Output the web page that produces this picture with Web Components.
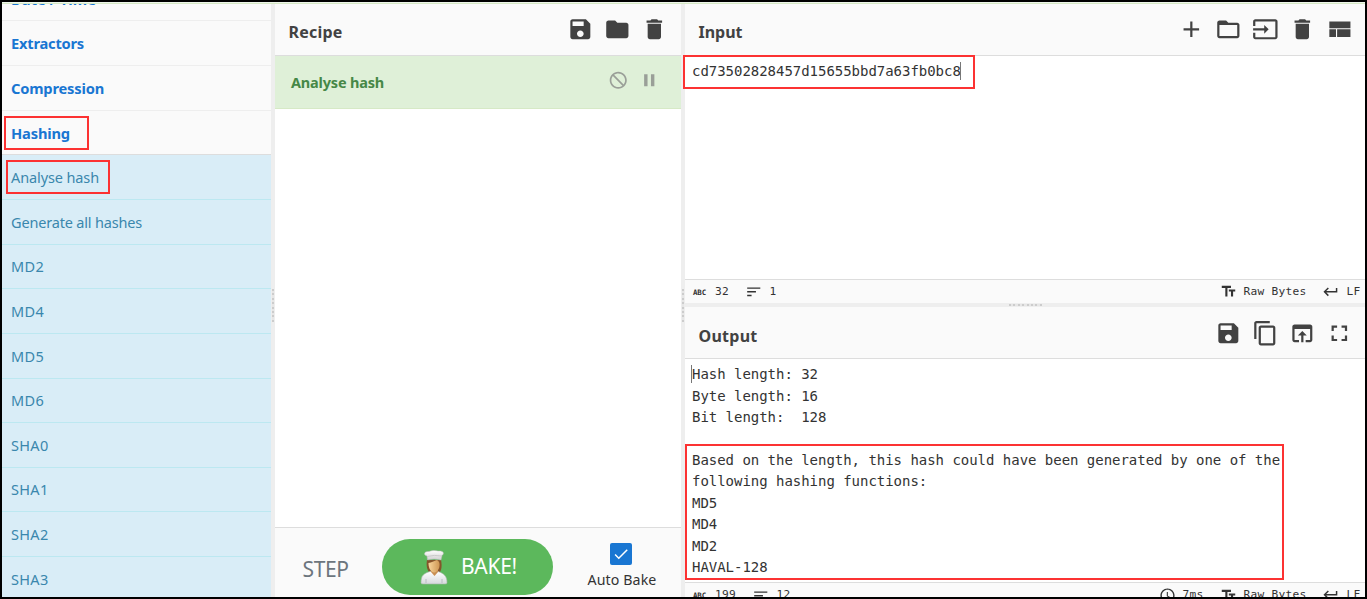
<!DOCTYPE html>
<html lang="en"><head><meta charset="utf-8"><title>CyberChef</title>
<style>
html,body{margin:0;height:100%;overflow:hidden;background:#000}
body{font-family:"Noto Sans","Open Sans",sans-serif}
</style></head>
<body>
<chef-app></chef-app>
<script>
const define = (name, html, setup) => customElements.define(name, class extends HTMLElement {
  connectedCallback() {
    if (this.shadowRoot) return;
    const root = this.attachShadow({mode: 'open'});
    root.innerHTML = html;
    if (setup) setup(this, root);
  }
});

const ICONS = {
  save: 'M17 3H5c-1.11 0-2 .9-2 2v14c0 1.1.89 2 2 2h14c1.1 0 2-.9 2-2V7l-4-4zm-5 16c-1.66 0-3-1.34-3-3s1.34-3 3-3 3 1.34 3 3-1.34 3-3 3zm3-10H5V5h10v4z',
  folder: 'M10 4H4c-1.1 0-1.99.9-1.99 2L2 18c0 1.1.9 2 2 2h16c1.1 0 2-.9 2-2V8c0-1.1-.9-2-2-2h-8l-2-2z',
  trash: 'M6 19c0 1.1.9 2 2 2h8c1.1 0 2-.9 2-2V7H6v12zM19 4h-3.5l-1-1h-5l-1 1H5v2h14V4z',
  add: 'M19 13h-6v6h-2v-6H5v-2h6V5h2v6h6v2z',
  open: 'M20 6h-8l-2-2H4c-1.1 0-1.99.9-1.99 2L2 18c0 1.1.9 2 2 2h16c1.1 0 2-.9 2-2V8c0-1.1-.9-2-2-2zm0 12H4V8h16v10z',
  input: 'M21 3.01H3c-1.1 0-2 .9-2 2V9h2V4.99h18v14.03H3V15H1v4.01c0 1.1.9 1.98 2 1.98h18c1.1 0 2-.88 2-1.98v-14c0-1.11-.9-2-2-2zM11 16l4-4-4-4v3H1v2h10v3z',
  layout: 'M3 19h6v-7H3v7zm7 0h12v-7H10v7zM3 5v6h19V5H3z',
  copy: 'M16 1H4c-1.1 0-2 .9-2 2v14h2V3h12V1zm3 4H8c-1.1 0-2 .9-2 2v14c0 1.1.9 2 2 2h11c1.1 0 2-.9 2-2V7c0-1.1-.9-2-2-2zm0 16H8V7h11v14z',
  browser: 'M19 4H5c-1.11 0-2 .9-2 2v12c0 1.1.89 2 2 2h4v-2H5V8h14v10h-4v2h4c1.1 0 2-.9 2-2V6c0-1.1-.89-2-2-2zm-7 6l-4 4h3v6h2v-6h3l-4-4z',
  full: 'M7 14H5v5h5v-2H7v-3zm-2-4h2V7h3V5H5v5zm12 7h-3v2h5v-5h-2v3zM14 5v2h3v3h2V5h-5z',
  disable: 'M12 2C6.48 2 2 6.48 2 12s4.48 10 10 10 10-4.48 10-10S17.52 2 12 2zm0 18c-4.42 0-8-3.58-8-8 0-1.85.63-3.55 1.69-4.9L16.9 18.31C15.55 19.37 13.85 20 12 20zm6.31-3.1L7.1 5.69C8.45 4.63 10.15 4 12 4c4.42 0 8 3.58 8 8 0 1.85-.63 3.55-1.69 4.9z',
  pause: 'M6 19h4V5H6v14zm8-14v14h4V5h-4z',
  lines: 'M3 18h6v-2H3v2zM3 6v2h18V6H3zm0 7h12v-2H3v2z',
  text: 'M2.5 4v3h5v12h3V7h5V4h-13zm19 5h-9v3h3v7h3v-7h3V9z',
  ret: 'M19 7v4H5.83l3.58-3.59L8 6l-6 6 6 6 1.41-1.41L5.83 13H21V7z',
  clock: 'M11.99 2C6.47 2 2 6.48 2 12s4.47 10 9.99 10C17.52 22 22 17.52 22 12S17.52 2 11.99 2zM12 20c-4.42 0-8-3.58-8-8s3.58-8 8-8 8 3.58 8 8-3.58 8-8 8zm.5-13H11v6l5.25 3.15.75-1.23-4.5-2.67z',
  check: 'M9 16.17L4.83 12l-1.42 1.41L9 19 21 7l-1.41-1.41z'
};

/* <m-icon name size> : one 24-unit glyph */
define('m-icon', `<style>:host{display:block;flex:none}svg{display:block;fill:currentColor}</style><svg viewBox="0 0 24 24"><path/></svg>`, (el, r) => {
  const s = el.getAttribute('size') || '26.67', svg = r.querySelector('svg');
  svg.setAttribute('width', s); svg.setAttribute('height', s);
  r.querySelector('path').setAttribute('d', ICONS[el.getAttribute('name')]);
});

/* <fit-text w> : tracks its text so that it runs exactly w pixels */
define('fit-text', `<style>:host{display:block;flex:none;white-space:pre}span{display:inline-block}</style><span><slot></slot></span>`, (el, r) => {
  const w = +el.getAttribute('w'), span = r.querySelector('span');
  el.style.width = w + 'px';
  span.style.letterSpacing = (w - span.getBoundingClientRect().width) / el.textContent.length + 'px';
});

define('op-category', `<style>
:host{display:flex;align-items:center;box-sizing:border-box;padding-left:9px;background:#fafafa;border-bottom:1px solid #eee;color:#1976d2;font:700 14.7px "Noto Sans",sans-serif;min-height:0}
:host([active]){border-bottom-color:#ddd}
:host([cut]){align-items:flex-end;line-height:22px;overflow:hidden}
:host([cut]) fit-text{margin-bottom:10.500px}
</style><fit-text></fit-text>`, (el, r) => fill(el, r));
define('op-item', `<style>
:host{display:flex;align-items:center;box-sizing:border-box;padding:0 0 1px 9px;background:#d9edf7;border-bottom:1px solid #bce8f1;color:#3a87ad;font:400 14.5px/20px "Noto Sans",sans-serif}
</style><fit-text></fit-text>`, (el, r) => fill(el, r));
function fill(el, r) {
  const old = r.querySelector('fit-text'), t = document.createElement('fit-text');
  t.setAttribute('w', el.getAttribute('w'));
  t.textContent = el.getAttribute('label');
  old.replaceWith(t);
}

define('op-list', `<style>
:host{display:grid;grid-template-rows:17px 45px 45px 44px 45px 45px 44px 45px 45px 44px 45px 44px 45px 45px;overflow:hidden;background:#d9edf7;min-height:0}
</style>
<op-category cut label="Date / Time" w="85"></op-category>
<op-category label="Extractors" w="73"></op-category>
<op-category label="Compression" w="93"></op-category>
<op-category active label="Hashing" w="59"></op-category>
<op-item label="Analyse hash" w="88"></op-item>
<op-item label="Generate all hashes" w="131"></op-item>
<op-item label="MD2" w="33"></op-item>
<op-item label="MD4" w="33"></op-item>
<op-item label="MD5" w="33"></op-item>
<op-item label="MD6" w="33"></op-item>
<op-item label="SHA0" w="37.5"></op-item>
<op-item label="SHA1" w="37.5"></op-item>
<op-item label="SHA2" w="37.5"></op-item>
<op-item label="SHA3" w="37.5"></op-item>`);

define('split-gutter', `<style>
:host{display:flex;align-items:center;justify-content:center;background:#eee}
i{display:block;width:2px;height:33px;background:repeating-linear-gradient(#ccc 0 2px,#e6e6e6 2px 4.4px)}
:host([row]) i{width:33px;height:2px;background:repeating-linear-gradient(90deg,#ccc 0 2px,#e6e6e6 2px 4.4px)}
:host(:not([row])) i{margin-top:9px}
</style><i></i>`);

define('pane-title', `<style>
:host{display:flex;box-sizing:border-box;height:52px;background:#fafafa;border-bottom:1px solid #ddd;color:#424242;justify-content:space-between;padding:0 13px 0 13.5px;align-items:center}
:host([io]){padding-right:12px}
:host([low]){padding-top:2px}
.t{font:700 16px/24px "Noto Sans",sans-serif;padding-top:4px}
.i{display:flex;gap:10.5px;padding-bottom:1px}
</style><div class="t"><slot></slot></div><div class="i"><slot name="icons"></slot></div>`);

define('recipe-op', `<style>
:host{display:flex;box-sizing:border-box;height:53px;background:#dff0d8;border-bottom:1px solid #d6e9c6;align-items:center;padding:0 22px 0 16px;color:#468847;font:700 14.5px "Noto Sans",sans-serif}
.x{margin-left:auto;display:flex;gap:10px;color:#9a9f98;padding-bottom:4px}
</style><fit-text w="93"><slot></slot></fit-text><div class="x"><m-icon name="disable" size="20.5"></m-icon><m-icon name="pause" size="20.5"></m-icon></div>`,
(el, r) => { const t = document.createElement('fit-text'); t.setAttribute('w', 93); t.textContent = el.textContent; r.querySelector('fit-text').replaceWith(t); });

define('chef-face', `<style>:host{display:block}svg{display:block}</style>
<svg width="28" height="36" viewBox="0 0 28 36">
<defs><linearGradient id="h" x2="0" y2="1"><stop stop-color="#fff"/><stop offset="1" stop-color="#cfcfcf"/></linearGradient>
<linearGradient id="f"><stop stop-color="#f7d59b"/><stop offset="1" stop-color="#cf9653"/></linearGradient>
<linearGradient id="b" x2="0" y2="1"><stop stop-color="#fff"/><stop offset="1" stop-color="#d6d9dc"/></linearGradient></defs>
<path d="M7 11C6 16 7 22 10 24h9c3-3 3-8 2-13z" fill="#85542a"/>
<path d="M1 34C1 26 4 24.500 10 22.500h8C24 24.500 27 27 27 34Q27 35 25 35H3Q1 35 1 34z" fill="url(#b)" stroke="#aab7ab" stroke-width=".6"/>
<path d="M11 20h7v3l-3.500 4L11 23z" fill="#c98f52"/>
<path d="M8.500 14C11 14 16 11 17 11c2 1 3 3 2.500 6-.5 4-3 6.500-5.500 6.500S8.500 20 8.500 14z" fill="url(#f)"/>
<path d="M7 7C3 6 4 2 9 2.500c4-1.500 7-1 9-.5 5-.5 7 2 4 4.500L21 11Q14 9 7.500 11z" fill="url(#h)" stroke="#bbb" stroke-width=".5"/>
<path d="M7 7.500Q14 5.500 22 7" fill="none" stroke="#c4c4c4" stroke-width=".8"/>
<path d="M6 30v4M22 30v4" stroke="#b9bec2" stroke-width="1"/>
</svg>`);

define('bake-bar', `<style>
:host{display:grid;grid-template-columns:107px 171px 34.5px 69px;height:70px;box-sizing:border-box;border-top:1px solid #ddd;background:#fafafa;overflow:hidden}
.step{padding:24px 0 0 27.5px;font-size:21px;line-height:34px;color:#6c757d}
.bake{display:flex;align-items:center;box-sizing:border-box;margin-top:11px;height:56px;border-radius:28px;background:#5cb85c;color:#fff;padding-left:38px;font-size:21px;line-height:30px}
.bake fit-text{margin-left:13px;margin-top:-2px}
.auto{grid-column:4;display:flex;flex-direction:column;align-items:center;color:#333;font-size:14.2px;line-height:20px}
.box{margin:15px 2px 5px 0;width:22px;height:22px;border-radius:2px;background:#1976d2;color:#fff;display:flex;align-items:center;justify-content:center}
</style>
<div class="step"><fit-text w="46">STEP</fit-text></div>
<div class="bake"><chef-face></chef-face><fit-text w="56">BAKE!</fit-text></div>
<div class="auto"><div class="box"><m-icon name="check" size="18"></m-icon></div><fit-text w="69">Auto Bake</fit-text></div>`);

define('recipe-pane', `<style>
:host{display:flex;flex-direction:column;background:#fff;min-height:0}
.list{flex:1}
</style>
<pane-title><fit-text w="54">Recipe</fit-text><m-icon slot="icons" name="save"></m-icon><m-icon slot="icons" name="folder"></m-icon><m-icon slot="icons" name="trash"></m-icon></pane-title>
<div class="list"><recipe-op>Analyse hash</recipe-op></div>
<bake-bar></bake-bar>`);

define('status-bar', `<style>
:host{display:flex;height:25px;box-sizing:border-box;border-top:1px solid #ddd;background:#fafafa;color:#333;align-items:center;padding:0 4.5px 0 8px;font:11.2px/20px "DejaVu Sans Mono",monospace;overflow:hidden}
.abc{font:700 7.5px/10px "DejaVu Sans Mono",monospace;margin:2px 9px 0 0}
.ln{margin:1px 7px 0 16px}
.r{margin-left:auto;display:flex;align-items:center}
.r m-icon{margin-right:7px}.r .g{margin-left:15px;margin-right:7.5px}
</style>
<fit-text class="abc" w="13">ABC</fit-text><span class="n"></span><m-icon class="ln" name="lines" size="17.5"></m-icon><span class="l"></span>
<div class="r"><m-icon class="c" name="clock" size="17"></m-icon><span class="time" style="margin-right:16px"></span><m-icon name="text" size="17"></m-icon><fit-text w="63">Raw Bytes</fit-text><m-icon class="g" name="ret" size="17.5"></m-icon><fit-text w="14">LF</fit-text></div>`, (el, r) => {
  const put = (sel, v) => {
    const t = document.createElement('fit-text'); t.setAttribute('w', v.length * 7); t.textContent = v;
    r.querySelector(sel).append(t);
  };
  put('.n', el.getAttribute('chars'));
  put('.l', el.getAttribute('lines'));
  const t = el.getAttribute('time');
  if (t) put('.time', t);
  else { r.querySelector('.c').remove(); r.querySelector('.time').remove(); }
});

define('text-area', `<style>
:host{display:block;position:relative;background:#fff;overflow:hidden;padding:5.3px 0 0 7px;box-sizing:border-box;font:14px/21.44px "DejaVu Sans Mono",monospace;letter-spacing:-.028px;color:#333;white-space:pre}
i{position:absolute;width:1px;height:18px;top:6px;left:var(--caret);background:#777}
</style><slot></slot><i></i>`);

define('io-pane', `<style>
:host{display:grid;grid-template-rows:52px 223px 24px 4px 52px 223px 15px;min-height:0;overflow:hidden}
status-bar.in{height:24px}
</style>
<pane-title io><fit-text w="44">Input</fit-text><m-icon slot="icons" name="add"></m-icon><m-icon slot="icons" name="open"></m-icon><m-icon slot="icons" name="input"></m-icon><m-icon slot="icons" name="trash"></m-icon><m-icon slot="icons" name="layout"></m-icon></pane-title>
<text-area style="--caret:275px">cd73502828457d15655bbd7a63fb0bc8</text-area>
<status-bar class="in" chars="32" lines="1"></status-bar>
<split-gutter row></split-gutter>
<pane-title io low><fit-text w="59">Output</fit-text><m-icon slot="icons" name="save"></m-icon><m-icon slot="icons" name="copy"></m-icon><m-icon slot="icons" name="browser"></m-icon><m-icon slot="icons" name="full"></m-icon></pane-title>
<text-area style="--caret:6px">Hash length: 32
Byte length: 16
Bit length:  128

Based on the length, this hash could have been generated by one of the
following hashing functions:
MD5
MD4
MD2
HAVAL-128</text-area>
<status-bar chars="199" lines="12" time="7ms"></status-bar>`);

/* red highlight frame laid over the interface */
define('mark-box', `<style>:host{display:block;position:absolute;box-sizing:border-box;border:2px solid #fc3232;z-index:2}</style>`);

define('chef-app', `<style>
:host{display:block;position:relative;box-sizing:border-box;width:1367px;height:599px;border:2px solid #000;overflow:hidden;background:#fff}
.top{height:1px;background:#eef6ea;border-bottom:1px solid #d6e9c6}
.main{display:grid;grid-template-columns:269px 4px 406px 4px 680px;height:593px}
</style>
<div class="top"></div>
<div class="main"><op-list></op-list><split-gutter></split-gutter><recipe-pane></recipe-pane><split-gutter></split-gutter><io-pane></io-pane></div>
<mark-box style="left:2px;top:114px;width:85px;height:34px"></mark-box>
<mark-box style="left:4px;top:158px;width:104px;height:34px"></mark-box>
<mark-box style="left:681px;top:53px;width:292px;height:34px"></mark-box>
<mark-box style="left:683px;top:442px;width:599px;height:136px"></mark-box>`);
</script>
</body></html>
